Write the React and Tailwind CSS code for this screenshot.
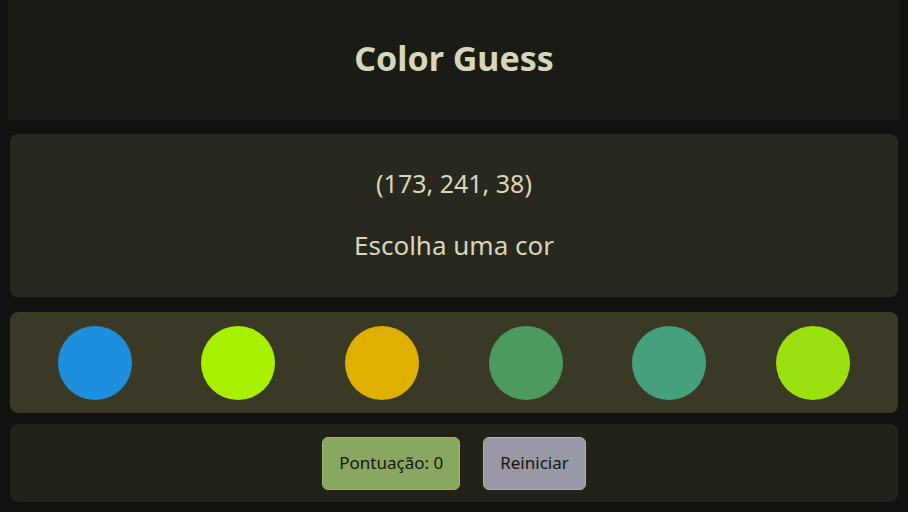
import React from "react";

const colors = ["#1e8fdc", "#a8f000", "#e0b000", "#4c9a60", "#46a07e", "#9de010"];

export default function App() {
  return (
    <div
      className="w-[908px] h-[512px] bg-[#111110] overflow-hidden flex flex-col"
      style={{ fontFamily: '"Noto Sans", "Open Sans", sans-serif' }}
    >
      <header className="mx-[8px] h-[120px] bg-[#1b1b15] flex items-center justify-center">
        <h1 className="text-[34px] font-bold text-[#d6d6bc] leading-none -mt-[4px]">Color Guess</h1>
      </header>
      <div className="flex flex-col gap-[14px] px-[10px] pt-[14px]">
        <section className="h-[163px] rounded-[8px] bg-[#28281e] flex flex-col items-center justify-center gap-[36px] text-[#d6d6bc] leading-none">
          <p className="text-[25px] -mt-[2px]">(173, 241, 38)</p>
          <p className="text-[26px]">Escolha uma cor</p>
        </section>
        <section className="h-[101px] rounded-[8px] bg-[#393926] grid grid-cols-6 px-[13px] items-center mt-[1px]">
          {colors.map((c, i) => (
            <div key={i} className="flex justify-center">
              <div className="w-[74px] h-[74px] rounded-full" style={{ backgroundColor: c }} />
            </div>
          ))}
        </section>
        <section className="h-[78px] rounded-[8px] bg-[#222219] flex items-center justify-center gap-[23px] -mt-[3px]">
          <button className="h-[53px] px-[16px] rounded-[6px] bg-[#88a862] border border-[#9ab872] text-[#15150f] text-[17px]">
            Pontuação: 0
          </button>
          <button className="h-[53px] px-[16px] rounded-[6px] bg-[#9898a6] border border-[#acacbc] text-[#15150f] text-[17px]">
            Reiniciar
          </button>
        </section>
      </div>
    </div>
  );
}
